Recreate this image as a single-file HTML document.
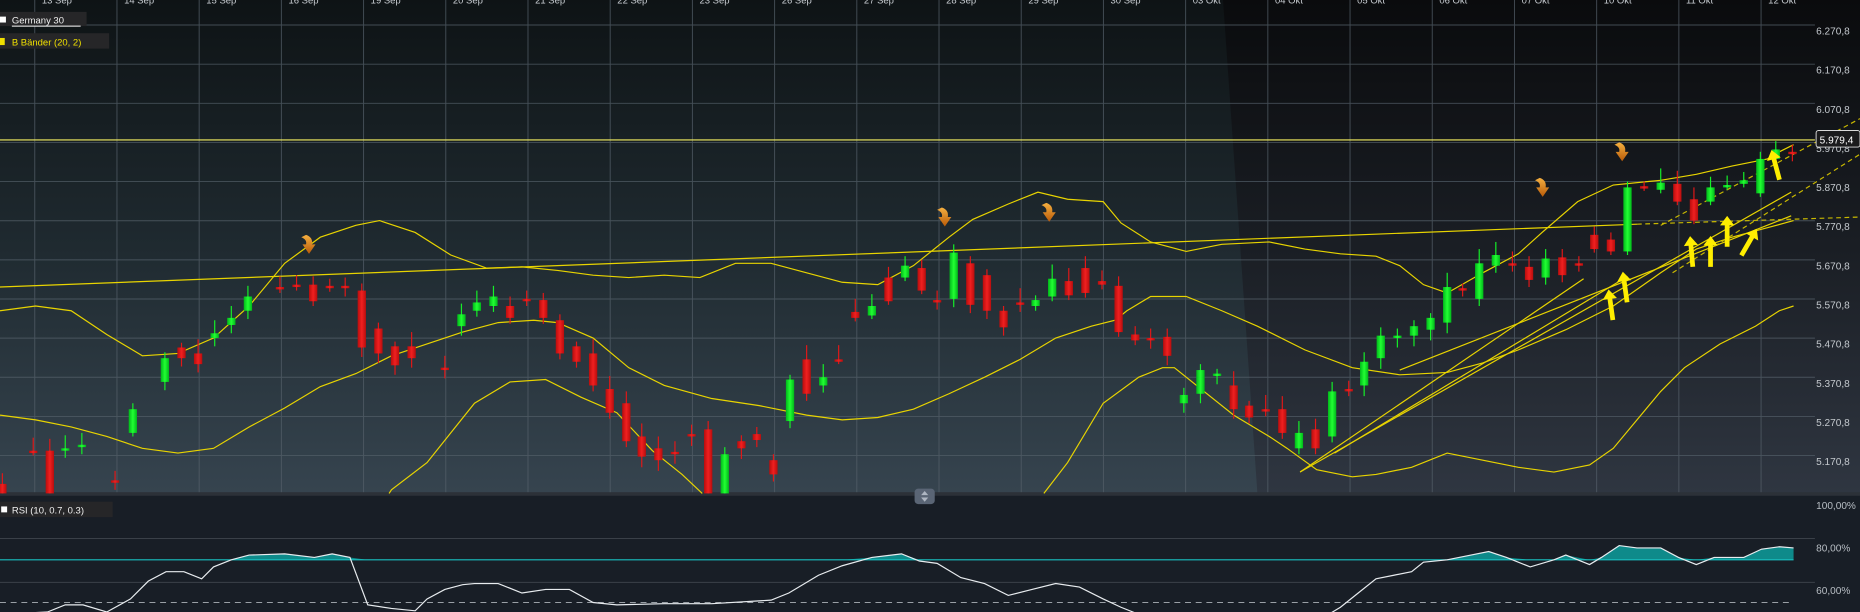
<!DOCTYPE html>
<html><head><meta charset="utf-8"><style>
html,body{margin:0;padding:0;background:#181e26;overflow:hidden}
svg{display:block}
text{font-family:"Liberation Sans",sans-serif}
</style></head><body>
<svg id="s" width="1860" height="612" viewBox="0 0 1568 516" preserveAspectRatio="none" xmlns="http://www.w3.org/2000/svg">
<defs>
<linearGradient id="bgL" x1="0" y1="0" x2="0" y2="1"><stop offset="0" stop-color="#0e1315"/><stop offset="0.5" stop-color="#1f2a30"/><stop offset="1" stop-color="#36444f"/></linearGradient>
<linearGradient id="bgR" x1="0" y1="0" x2="0" y2="1"><stop offset="0" stop-color="#0a0b0d"/><stop offset="0.5" stop-color="#1a1e24"/><stop offset="1" stop-color="#2f3641"/></linearGradient>
<linearGradient id="gG" x1="0" x2="1"><stop offset="0" stop-color="#00b81a"/><stop offset="0.5" stop-color="#22ff33"/><stop offset="1" stop-color="#00b81a"/></linearGradient>
<linearGradient id="gR" x1="0" x2="1"><stop offset="0" stop-color="#b80d0d"/><stop offset="0.5" stop-color="#f02020"/><stop offset="1" stop-color="#b80d0d"/></linearGradient>
<linearGradient id="gO" x1="0" y1="0" x2="0" y2="1"><stop offset="0" stop-color="#f5b040"/><stop offset="1" stop-color="#b85a08"/></linearGradient>
</defs>
<rect x="0" y="0" width="1568" height="416" fill="url(#bgL)"/>
<polygon points="1031,0 1568,0 1568,416 1060,416" fill="url(#bgR)"/>
<g id="grid" stroke="#55606a" stroke-width="0.8" opacity="0.75"></g>
<g id="dates" fill="#c8cdd2" font-size="8"></g>
<g id="prices" fill="#c4c9ce" font-size="8.5"></g>
<!-- RSI panel -->
<rect x="0" y="416" width="1568" height="100" fill="#181e26"/>
<rect x="0" y="415" width="1568" height="3" fill="#2c3138"/>
<g stroke="#3a4048" stroke-width="0.8"><line x1="0" y1="454" x2="1530" y2="454"/><line x1="0" y1="491" x2="1530" y2="491"/></g>
<line x1="0" y1="508" x2="1512" y2="508" stroke="#9aa0a6" stroke-width="0.8" stroke-dasharray="5,4"/>
<g fill="#b8bec4" font-size="8.5"><text x="1531" y="429">100,00%</text><text x="1531" y="465">80,00%</text><text x="1531" y="501">60,00%</text></g>
<path id="rsifill" fill="#0e8a8a"/>
<line x1="0" y1="472" x2="1512" y2="472" stroke="#18c0c0" stroke-width="0.9"/>
<polyline id="rsi" fill="none" stroke="#e8ecef" stroke-width="1"/>
<rect x="0" y="423" width="95" height="13" fill="#262628"/>
<rect x="1" y="427" width="5" height="5" fill="#fff"/>
<text x="10" y="433" fill="#f0f0f0" font-size="8">RSI (10, 0.7, 0.3)</text>
<!-- bands -->
<g fill="none" stroke="#e8d400" stroke-width="1">
<polyline points="0,262 30,258 60,262 90,282 120,300 150,298 180,285 210,258 240,222 270,200 300,190 320,186 350,196 380,215 410,226 440,225 470,228 500,232 530,234 560,232 590,234 620,222 650,222 680,230 710,238 740,240 770,224 800,200 820,185 850,172 875,162 900,168 930,170 945,188 970,204 1000,212 1030,206 1070,204 1100,210 1130,214 1160,216 1180,224 1200,240 1220,247 1250,230 1280,214 1300,196 1330,170 1360,156 1400,152 1430,147 1460,140 1490,134 1500,128 1512,122"/>
<polyline points="0,350 30,354 60,360 90,368 120,378 150,382 180,378 210,360 240,344 270,326 300,315 330,300 360,290 390,280 420,272 450,270 470,272 500,285 530,310 560,325 600,336 640,342 680,350 710,354 740,352 770,345 800,332 830,318 860,303 890,285 920,275 940,270 950,262 970,250 1000,250 1030,262 1060,275 1100,295 1140,310 1180,316 1220,314 1250,306 1280,295 1320,278 1360,258 1400,230 1430,210 1460,200 1490,192 1512,186"/>
<polyline points="328,416 330,413 360,390 380,365 400,340 430,322 460,320 490,335 520,348 550,380 575,400 592,416"/>
<polyline points="880,416 900,390 930,340 960,318 980,310 990,310 1010,326 1040,350 1070,368 1085,378 1110,396 1140,402 1160,400 1190,394 1220,382 1250,388 1280,394 1310,398 1340,392 1360,378 1380,354 1400,330 1420,310 1450,290 1480,275 1500,262 1512,258"/>
<line x1="0" y1="242" x2="1380" y2="189"/>
<line x1="1096" y1="398" x2="1335" y2="235"/>
<line x1="1096" y1="398" x2="1510" y2="162"/>
<line x1="1125" y1="382" x2="1372" y2="233"/>
<line x1="1180" y1="312" x2="1510" y2="182"/>
</g>
<g fill="none" stroke="#c8b800" stroke-width="1" stroke-dasharray="4,3">
<line x1="1380" y1="189" x2="1568" y2="183"/>
<line x1="1400" y1="190" x2="1568" y2="100"/>
<line x1="1410" y1="230" x2="1568" y2="130"/>
</g>
<line x1="0" y1="118" x2="1530" y2="118" stroke="#f4ee60" stroke-width="1"/>
<g id="candles"></g>
<g id="arrows"></g>
<!-- price tag -->
<rect x="1531" y="110" width="37" height="14" rx="2" fill="#1a1a1c" stroke="#d8d8d8" stroke-width="0.8"/>
<text x="1534" y="121" fill="#fff" font-size="8.5">5.979,4</text>
<!-- legends -->
<rect x="0" y="10" width="73" height="12" fill="#262628"/>
<rect x="0" y="14" width="5" height="5" fill="#fff"/>
<text x="10" y="20" fill="#f0f0f0" font-size="8">Germany 30</text>
<line x1="10" y1="22" x2="68" y2="22" stroke="#fff" stroke-width="0.8"/>
<rect x="0" y="28" width="92" height="13" fill="#262628"/>
<rect x="0" y="32" width="4" height="6" fill="#f0e000"/>
<text x="10" y="38.5" fill="#f0e000" font-size="8">B Bänder (20, 2)</text>
<!-- handle -->
<rect x="771" y="412" width="17" height="13" rx="3" fill="#5a6575"/>
<path d="M779.5 414 l3 3.5 h-6 z M779.5 423 l3 -3.5 h-6 z" fill="#aeb6c2"/>
</svg>
<script>
var NS="http://www.w3.org/2000/svg";
function el(t,a,p){var e=document.createElementNS(NS,t);for(var k in a)e.setAttribute(k,a[k]);p.appendChild(e);return e;}
var grid=document.getElementById('grid'),dates=document.getElementById('dates'),prices=document.getElementById('prices');
var dl=["13 Sep","14 Sep","15 Sep","16 Sep","19 Sep","20 Sep","21 Sep","22 Sep","23 Sep","26 Sep","27 Sep","28 Sep","29 Sep","30 Sep","03 Okt","04 Okt","05 Okt","06 Okt","07 Okt","10 Okt","11 Okt","12 Okt"];
for(var i=0;i<22;i++){var x=29.3+69.3*i;el('line',{x1:x,y1:0,x2:x,y2:416},grid);var t=el('text',{x:x+6,y:3},dates);t.textContent=dl[i];}
for(var j=0;j<12;j++){var y=21.1+33*j;el('line',{x1:0,y1:y,x2:1530,y2:y},grid);if(j<12){var p=6270.8-100*j;var s=(p/1000|0)+"."+String(Math.round((p%1000)*10)/10).replace('.',',');var tt=el('text',{x:1531,y:y+8},prices);tt.textContent=s.replace(/\.(\d),/,'.00$1,').replace(/\.(\d\d),/,'.0$1,');}}
// candles: x, top, bottom, color
var C=[[2,408,416,'r'],[28,380,381,'r'],[42,380,416,'r'],[55,378,379,'g'],[69,375,376,'g'],[97,405,406,'r'],[112,345,365,'g'],[139,302,322,'g'],[153,293,302,'r'],[167,298,307,'r'],[181,281,285,'g'],[195,268,274,'g'],[209,250,262,'g'],[236,242,243,'r'],[250,240,241,'r'],[264,240,254,'r'],[278,241,242,'r'],[291,241,242,'r'],[305,245,293,'r'],[319,277,298,'r'],[333,292,308,'r'],[347,292,302,'r'],[375,310,311,'r'],[389,265,275,'g'],[402,255,262,'g'],[416,250,258,'g'],[430,258,268,'r'],[444,252,253,'r'],[458,253,268,'r'],[472,270,298,'r'],[486,292,305,'r'],[500,298,325,'r'],[514,328,348,'r'],[528,340,372,'r'],[541,368,385,'r'],[555,378,388,'r'],[569,381,382,'r'],[583,366,367,'r'],[597,362,416,'r'],[611,383,416,'g'],[625,372,378,'r'],[638,366,371,'r'],[652,388,400,'r'],[666,320,355,'g'],[680,303,332,'r'],[694,318,325,'g'],[707,303,304,'r'],[721,263,268,'r'],[735,258,266,'g'],[749,234,254,'r'],[763,224,234,'g'],[777,226,245,'r'],[790,253,254,'r'],[804,213,252,'g'],[818,222,257,'r'],[832,232,262,'r'],[846,262,276,'r'],[860,255,256,'r'],[873,253,258,'g'],[887,235,250,'g'],[901,237,249,'r'],[915,226,247,'r'],[929,237,240,'r'],[943,241,280,'r'],[957,282,287,'r'],[970,285,286,'r'],[984,284,300,'r'],[998,333,340,'g'],[1012,312,332,'g'],[1026,315,316,'g'],[1040,325,345,'r'],[1053,342,352,'r'],[1067,345,346,'r'],[1081,345,365,'r'],[1095,365,378,'g'],[1109,362,378,'r'],[1123,330,368,'g'],[1137,328,329,'r'],[1150,305,325,'g'],[1164,283,302,'g'],[1178,283,284,'g'],[1192,275,283,'g'],[1206,268,278,'g'],[1220,242,272,'g'],[1233,243,244,'r'],[1247,222,252,'g'],[1261,215,224,'g'],[1275,222,223,'r'],[1289,225,236,'r'],[1303,218,234,'g'],[1317,217,232,'r'],[1331,222,223,'r'],[1344,198,210,'r'],[1358,202,212,'r'],[1372,158,212,'g'],[1386,157,158,'r'],[1400,154,160,'g'],[1414,155,170,'r'],[1428,168,186,'r'],[1442,158,170,'g'],[1456,156,157,'g'],[1470,152,155,'g'],[1484,134,163,'g'],[1497,126,134,'g'],[1511,128,129,'r']];
var cg=document.getElementById('candles');
C.forEach(function(c){var col=c[3]=='g'?'#14f028':'#e01818';var wt=c[1]-4-((c[0]*7)%9),wb=c[2]+3+((c[0]*3)%7);if(wb>416)wb=416;
el('line',{x1:c[0],y1:wt,x2:c[0],y2:wb,stroke:col,'stroke-width':1},cg);
var h=Math.max(2,c[2]-c[1]);el('rect',{x:c[0]-3.5,y:c[1],width:7,height:h,fill:c[3]=='g'?'url(#gG)':'url(#gR)'},cg);});
var ag=document.getElementById('arrows');
[[263,208],[799,185],[887,181],[1303,160],[1370,130]].forEach(function(a){
el('path',{d:'M'+(a[0]-5)+' '+(a[1]-10)+' q6 2 5 8 h3 l-5.5 8 l-5.5 -8 h3 q1 -4 -4 -6 z',fill:'url(#gO)'},ag);});
[[1358,258,-8],[1370,243,-8],[1426,213,-5],[1442,213,0],[1456,196,0],[1474,205,30],[1497,140,-15]].forEach(function(a){
var g=el('g',{transform:'translate('+a[0]+','+a[1]+') rotate('+a[2]+')'},ag);
el('path',{d:'M0 -14 L6 -6 L2 -6 L2 12 L-2 12 L-2 -6 L-6 -6 Z',fill:'#ffee00'},g);});
var R=[[0,518],[40,516],[55,510],[70,510],[90,516],[110,505],[125,490],[140,482],[155,482],[170,488],[180,478],[195,472],[210,468],[240,467],[265,470],[280,467],[295,470],[310,510],[330,513],[350,515],[360,505],[375,497],[390,493],[400,492],[420,492],[440,500],[460,497],[480,497],[500,508],[520,510],[560,509],[600,509],[650,506],[665,500],[690,485],[710,477],[735,470],[760,467],[775,473],[790,475],[810,487],[830,492],[850,502],[870,497],[890,492],[910,495],[930,505],[945,512],[960,518],[1120,518],[1130,512],[1145,500],[1160,488],[1175,485],[1190,482],[1200,474],[1220,472],[1240,468],[1255,465],[1270,470],[1290,478],[1310,472],[1320,468],[1340,476],[1350,470],[1365,460],[1380,462],[1400,462],[1415,470],[1430,476],[1445,470],[1470,470],[1485,463],[1500,461],[1512,462]];
document.getElementById('rsi').setAttribute('points',R.map(function(p){return p.join(',')}).join(' '));
var d='M0 472 '+R.map(function(p){return 'L'+p[0]+' '+Math.min(p[1],472)}).join(' ')+' L1512 472 Z';
document.getElementById('rsifill').setAttribute('d',d);
</script>
</body></html>
